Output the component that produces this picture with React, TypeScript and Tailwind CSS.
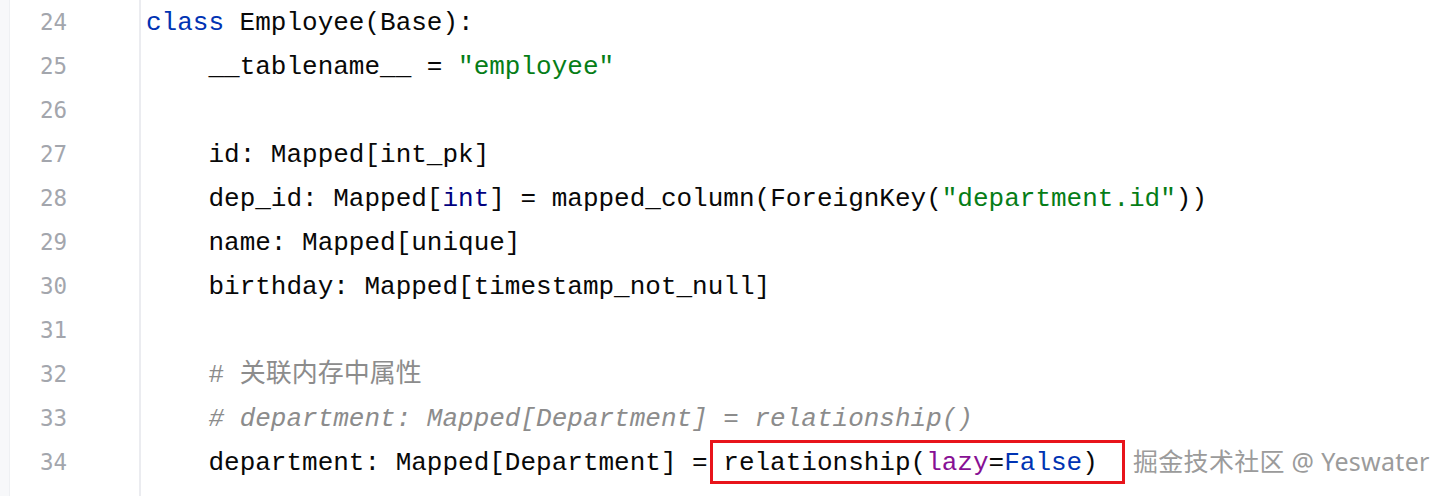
import React from "react";

const K = ({ children }: { children: React.ReactNode }) => <span className="text-[#0033b3]">{children}</span>;
const S = ({ children }: { children: React.ReactNode }) => <span className="text-[#067d17]">{children}</span>;
const C = ({ children }: { children: React.ReactNode }) => <span className="text-[#8c8c8c] italic">{children}</span>;

const lines: { n: number; content: React.ReactNode }[] = [
  { n: 24, content: <><K>class</K> Employee(Base):</> },
  { n: 25, content: <>{"    "}__tablename__ = <S>"employee"</S></> },
  { n: 26, content: <></> },
  { n: 27, content: <>{"    "}id: Mapped[int_pk]</> },
  { n: 28, content: <>{"    "}dep_id: Mapped[<span className="text-[#000080]">int</span>] = mapped_column(ForeignKey(<S>"department.id"</S>))</> },
  { n: 29, content: <>{"    "}name: Mapped[unique]</> },
  { n: 30, content: <>{"    "}birthday: Mapped[timestamp_not_null]</> },
  { n: 31, content: <></> },
  { n: 32, content: <>{"    "}<span className="text-[#8c8c8c]"># 关联内存中属性</span></> },
  { n: 33, content: <>{"    "}<C># department: Mapped[Department] = relationship()</C></> },
  {
    n: 34,
    content: (
      <>
        {"    "}department: Mapped[Department] = relationship(<span className="text-[#871094]">lazy</span>=<K>False</K>)
      </>
    ),
  },
];

export default function App() {
  return (
    <div className="relative w-[1444px] h-[496px] overflow-hidden bg-white flex">
      <div className="w-[10px] bg-[#f7f8fa] border-r border-[#eef0f3]" />
      <div className="w-[131px] border-r-2 border-[#ebecf0] pt-px">
        {lines.map((l) => (
          <div
            key={l.n}
            className="h-[44px] w-[57px] flex items-center justify-end text-[22.5px] text-[#a3a6ad]"
            style={{ fontFamily: '"DejaVu Sans Mono", "Liberation Mono", monospace' }}
          >
            {l.n}
          </div>
        ))}
      </div>
      <div className="flex-1 pl-[5px] pt-px">
        {lines.map((l) => (
          <div
            key={l.n}
            className="h-[44px] flex items-center text-[26px] text-[#080808]"
            style={{ fontFamily: '"Liberation Mono", "Noto Sans CJK SC", monospace' }}
          >
            <span className="whitespace-pre">{l.content}</span>
          </div>
        ))}
      </div>
      <div className="absolute left-[710px] top-[440px] w-[415px] h-[44px] border-[3px] border-[#e8141b]" />
      <div
        className="absolute left-[1133px] top-[445px] text-[25px] leading-[32px] tracking-[0.3px] text-[#9b9b9b] whitespace-pre"
        style={{ fontFamily: '"Noto Sans", "Noto Sans CJK SC", sans-serif', textShadow: "1px 1px 0 #ffffff, -1px -1px 0 #ffffff" }}
      >
        掘金技术社区 @ Yeswater
      </div>
    </div>
  );
}
